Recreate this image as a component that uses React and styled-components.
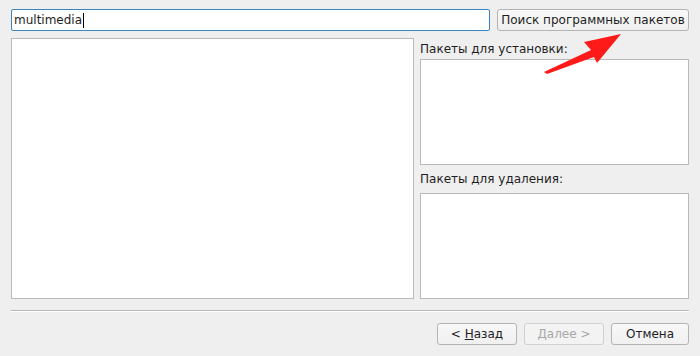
import React from "react";
import styled, { createGlobalStyle } from "styled-components";

const GlobalStyle = createGlobalStyle`
  html, body {
    margin: 0;
    padding: 0;
    background: #efefef;
  }
  body {
    font-family: "DejaVu Sans", "Liberation Sans", sans-serif;
    font-size: 12px;
    color: #1e1e1e;
  }
`;

const Window = styled.div`
  position: relative;
  width: 700px;
  height: 356px;
  box-sizing: border-box;
  padding: 9px 11px 0 11px;
  background: #efefef;
  display: flex;
  flex-direction: column;
`;

const SearchRow = styled.div`
  display: flex;
  gap: 7px;
  height: 22px;
`;

const SearchInput = styled.div`
  flex: 1;
  box-sizing: border-box;
  background: #fff;
  border: 1px solid #3b84c0;
  border-radius: 2px;
  display: flex;
  align-items: center;
  padding-left: 2px;
  font-size: 12px;
`;

const Caret = styled.span`
  display: inline-block;
  width: 1px;
  height: 15px;
  background: #000;
  margin-left: 1px;
`;

const Button = styled.div`
  box-sizing: border-box;
  width: ${p => p.w}px;
  height: 22px;
  border: 1px solid ${p => (p.disabled ? "#cfcfcf" : "#b4b4b4")};
  border-radius: 3px;
  background: ${p => (p.disabled ? "#f3f3f3" : "linear-gradient(#f8f8f8, #f0f0f0)")};
  color: ${p => (p.disabled ? "#a8a8a8" : "#1e1e1e")};
  display: flex;
  align-items: center;
  justify-content: center;
  font-size: 12px;
  u {
    text-decoration: underline;
  }
`;

const Middle = styled.div`
  display: flex;
  gap: 6px;
  margin-top: 7px;
  height: 261px;
`;

const ListBox = styled.div`
  box-sizing: border-box;
  background: #fff;
  border: 1px solid #b9b9b9;
  width: ${p => (p.w ? `${p.w}px` : "auto")};
  height: ${p => (p.h ? `${p.h}px` : "auto")};
`;

const SideColumn = styled.div`
  flex: 1;
  display: flex;
  flex-direction: column;
`;

const Label = styled.div`
  height: ${p => p.h}px;
  display: flex;
  align-items: center;
  font-size: 12px;
`;

const Separator = styled.div`
  margin-top: 11px;
  height: 1px;
  background: #b7b7b7;
  border-bottom: 1px solid #fff;
`;

const ButtonRow = styled.div`
  display: flex;
  justify-content: flex-end;
  gap: 7px;
  margin-top: 11px;
`;

const Arrow = styled.svg`
  position: absolute;
  left: 0;
  top: 0;
  pointer-events: none;
`;

export default function App() {
  return (
    <>
      <GlobalStyle />
      <Window>
        <SearchRow>
          <SearchInput>
            multimedia<Caret />
          </SearchInput>
          <Button w={192}>Поиск программных пакетов</Button>
        </SearchRow>
        <Middle>
          <ListBox w={403} />
          <SideColumn>
            <Label h={21}>Пакеты для установки:</Label>
            <ListBox h={106} />
            <Label h={28}>Пакеты для удаления:</Label>
            <ListBox h={106} />
          </SideColumn>
        </Middle>
        <Separator />
        <ButtonRow>
          <Button w={80}>
            &lt;&nbsp;<u>Н</u>азад
          </Button>
          <Button w={80} disabled>
            <u>Д</u>алее&nbsp;&gt;
          </Button>
          <Button w={78}>Отмена</Button>
        </ButtonRow>
        <Arrow width="700" height="356" viewBox="0 0 700 356">
          <polygon
            points="621,34 584,42 591,50 544,72 547,74 594,57 597,63"
            fill="#ff1a1a"
          />
        </Arrow>
      </Window>
    </>
  );
}
